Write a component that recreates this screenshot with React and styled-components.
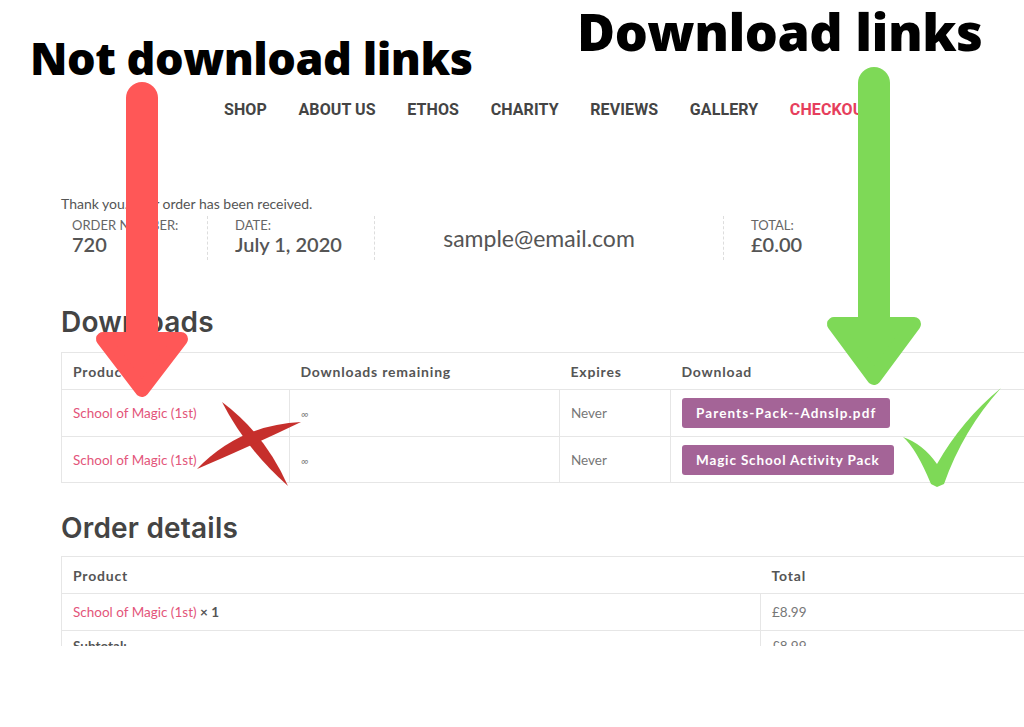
import React from "react";
import styled, { createGlobalStyle } from "styled-components";

const GlobalStyle = createGlobalStyle`
  html, body {
    margin: 0;
    padding: 0;
    background: #ffffff;
  }
  * {
    box-sizing: border-box;
  }
`;

const Page = styled.div`
  position: relative;
  width: 1024px;
  height: 727px;
  overflow: hidden;
  background: #ffffff;
`;

const Shot = styled.div`
  height: 646px;
  overflow: hidden;
  font-family: "Lato", "Open Sans", sans-serif;
  color: #555;
`;

const Nav = styled.ul`
  list-style: none;
  margin: 100px 0 0;
  padding: 0 0 0 224px;
  display: flex;
  gap: 31.6px;
  font-family: "Roboto", sans-serif;
  font-weight: 700;
  font-size: 16px;
  line-height: 19px;
  letter-spacing: 0.1px;
`;

const NavItem = styled.li`
  color: ${(p) => (p.active ? "#e63e5c" : "#444")};
  white-space: nowrap;
`;

const Content = styled.div`
  padding-left: 61px;
`;

const Notice = styled.p`
  margin: 76px 0 0;
  font-size: 14px;
  line-height: 17px;
  color: #555;
`;

const Overview = styled.ul`
  list-style: none;
  margin: 4px 0 0;
  padding: 0;
  display: flex;
  height: 44px;
`;

const OverviewItem = styled.li`
  width: ${(p) => p.w}px;
  padding-left: ${(p) => p.pad}px;
  border-right: ${(p) => (p.last ? "none" : "1px dashed #ddd")};
  display: flex;
  flex-direction: column;
  justify-content: ${(p) => (p.center ? "center" : "flex-start")};
  align-items: ${(p) => (p.center ? "center" : "flex-start")};
`;

const Label = styled.span`
  font-size: 13px;
  line-height: 14px;
  margin-top: 2px;
  text-transform: uppercase;
  color: #666;
`;

const Value = styled.strong`
  font-size: 20px;
  line-height: 24px;
  font-weight: 600;
  color: #555;
`;

const Email = styled.span`
  font-size: 23px;
  line-height: 26px;
  color: #555;
  margin-right: 20px;
`;

const Heading = styled.h2`
  margin: ${(p) => p.top}px 0 ${(p) => p.bottom}px;
  font-family: "Inter", "Open Sans", sans-serif;
  font-weight: 600;
  font-size: 28px;
  line-height: 34px;
  letter-spacing: 0.2px;
  color: #444;
`;

const Table = styled.table`
  width: 1000px;
  border-collapse: collapse;
  border: 1px solid #e6e6e6;
  table-layout: fixed;
  font-size: 13.5px;
`;

const Th = styled.th`
  width: ${(p) => (p.w ? `${p.w}px` : "auto")};
  height: 37px;
  padding: 0 11px;
  text-align: left;
  font-weight: 700;
  font-size: 14px;
  letter-spacing: 0.8px;
  color: #555;
  border-bottom: 1px solid #e6e6e6;
`;

const Td = styled.td`
  height: ${(p) => p.h || 47}px;
  padding: 0 11px;
  border-top: 1px solid #e6e6e6;
  border-left: 1px solid #e6e6e6;
  color: #777;
  white-space: nowrap;
`;

const ProductLink = styled.a`
  color: #e3557a;
  text-decoration: none;
`;

const Qty = styled.strong`
  color: #555;
  font-weight: 700;
`;

const Infinity = styled.span`
  font-style: italic;
  font-size: 11px;
  color: #888;
`;

const DownloadButton = styled.a`
  display: inline-flex;
  align-items: center;
  height: 30px;
  padding: 0 14px;
  border-radius: 3px;
  background: #a46497;
  color: #fff;
  font-weight: 700;
  font-size: 13.5px;
  letter-spacing: ${(p) => p.spacing}px;
  text-decoration: none;
`;

const Callout = styled.div`
  position: absolute;
  left: ${(p) => p.x}px;
  top: ${(p) => p.y}px;
  font-family: "Open Sans", sans-serif;
  font-weight: 800;
  font-size: ${(p) => p.size}px;
  line-height: 1;
  letter-spacing: -0.5px;
  color: #000;
  white-space: nowrap;
`;

const Marks = styled.svg`
  position: absolute;
  left: 0;
  top: 0;
  pointer-events: none;
`;

function Arrow({ x, top, headTop, tip, half, color }) {
  return (
    <g fill={color} stroke={color}>
      <line x1={x} y1={top + 16} x2={x} y2={headTop + 12} strokeWidth="32" strokeLinecap="round" />
      <polygon
        points={`${x - half},${headTop + 7} ${x + half},${headTop + 7} ${x},${tip - 7}`}
        strokeWidth="14"
        strokeLinejoin="round"
      />
    </g>
  );
}

function Annotations() {
  return (
    <Marks width="1024" height="727" viewBox="0 0 1024 727">
      <Arrow x={142} top={82} headTop={332} tip={397} half={39} color="#ff5757" />
      <Arrow x={874} top={67} headTop={317} tip={385} half={40} color="#7ed957" />
      <g fill="#c62f2c">
        <path d="M222 402 Q265 434 288 486 Q246 449 222 402 Z" />
        <path d="M197 469 Q239 425 301 422 Q249 447 197 469 Z" />
      </g>
      <path
        fill="#7ed957"
        d="M903 437 Q916 448 931 484 L937 487 L944 484 Q963 430 1001 388 Q962 420 937 464 Q923 444 903 437 Z"
      />
    </Marks>
  );
}

const navItems = ["SHOP", "ABOUT US", "ETHOS", "CHARITY", "REVIEWS", "GALLERY", "CHECKOUT"];

const downloads = [
  { product: "School of Magic (1st)", file: "Parents-Pack--Adnslp.pdf", h: 47, spacing: 1.1 },
  { product: "School of Magic (1st)", file: "Magic School Activity Pack", h: 46, spacing: 0.85 },
];

function App() {
  return (
    <Page>
      <GlobalStyle />
      <Shot>
        <Nav>
          {navItems.map((item) => (
            <NavItem key={item} active={item === "CHECKOUT"}>
              {item}
            </NavItem>
          ))}
        </Nav>
        <Content>
          <Notice>Thank you. Your order has been received.</Notice>
          <Overview>
            <OverviewItem w={147} pad={11}>
              <Label>Order number:</Label>
              <Value>720</Value>
            </OverviewItem>
            <OverviewItem w={167} pad={27}>
              <Label>Date:</Label>
              <Value>July 1, 2020</Value>
            </OverviewItem>
            <OverviewItem w={349} pad={0} center>
              <Email>sample@email.com</Email>
            </OverviewItem>
            <OverviewItem w={200} pad={27} last>
              <Label>Total:</Label>
              <Value>£0.00</Value>
            </OverviewItem>
          </Overview>

          <Heading top={45} bottom={13}>Downloads</Heading>
          <Table>
            <thead>
              <tr>
                <Th w={228}>Product</Th>
                <Th w={270}>Downloads remaining</Th>
                <Th w={111}>Expires</Th>
                <Th>Download</Th>
              </tr>
            </thead>
            <tbody>
              {downloads.map((row) => (
                <tr key={row.file}>
                  <Td h={row.h}>
                    <ProductLink href="#">{row.product}</ProductLink>
                  </Td>
                  <Td h={row.h}>
                    <Infinity>∞</Infinity>
                  </Td>
                  <Td h={row.h}>Never</Td>
                  <Td h={row.h}>
                    <DownloadButton href="#" spacing={row.spacing}>
                      {row.file}
                    </DownloadButton>
                  </Td>
                </tr>
              ))}
            </tbody>
          </Table>

          <Heading top={28} bottom={11}>Order details</Heading>
          <Table>
            <thead>
              <tr>
                <Th w={699}>Product</Th>
                <Th>Total</Th>
              </tr>
            </thead>
            <tbody>
              <tr>
                <Td h={37}>
                  <ProductLink href="#">School of Magic (1st)</ProductLink> <Qty>× 1</Qty>
                </Td>
                <Td h={37}>£8.99</Td>
              </tr>
              <tr>
                <Td h={30}>
                  <Qty>Subtotal:</Qty>
                </Td>
                <Td h={30}>£8.99</Td>
              </tr>
            </tbody>
          </Table>
        </Content>
      </Shot>

      <Callout x={30} y={35} size={45}>Not download links</Callout>
      <Callout x={577} y={5} size={52}>Download links</Callout>
      <Annotations />
    </Page>
  );
}

export default App;
